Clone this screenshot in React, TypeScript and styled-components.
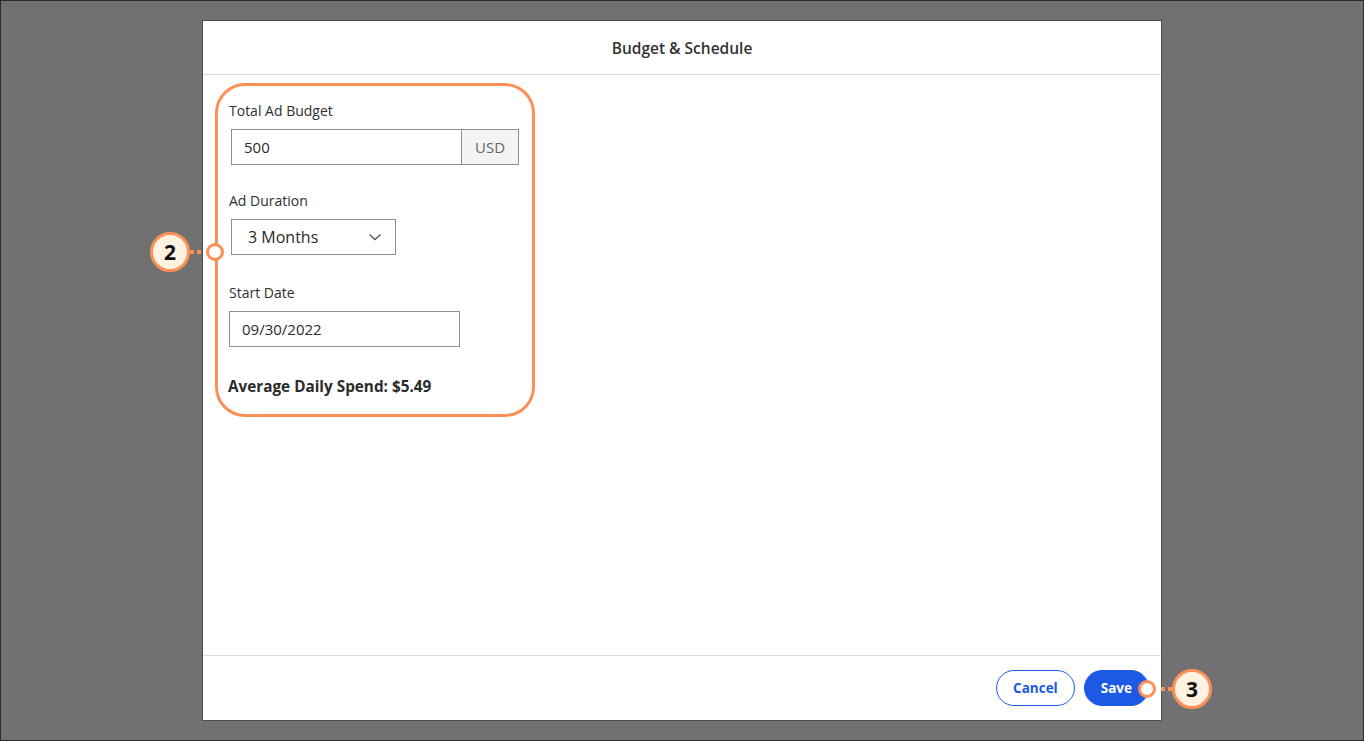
import React from "react";
import styled, { createGlobalStyle } from "styled-components";

const Global = createGlobalStyle`
  html, body { margin: 0; padding: 0; }
  body { font-family: "Open Sans", Lato, sans-serif; color: #2b2b2b; }
  * { box-sizing: border-box; }
`;

const Stage = styled.div`
  position: relative;
  width: 1364px;
  height: 741px;
  background: #717171;
  border: 1px solid #2a2a2a;
  display: flex;
  justify-content: center;
  padding-top: 19px;
`;

const Modal = styled.div`
  width: 960px;
  height: 701px;
  background: #fff;
  border: 1px solid #4e4e4e;
  display: flex;
  flex-direction: column;
`;

const Header = styled.div`
  height: 54px;
  flex: none;
  display: flex;
  align-items: center;
  justify-content: center;
  border-bottom: 1px solid #dcdcdc;
  font-size: 15.5px;
  font-weight: 600;
  color: #333;
`;

const Body = styled.div`
  flex: 1;
  padding: 8px 12px;
`;

const Panel = styled.div`
  position: relative;
  width: 320px;
  height: 334px;
  border: 3px solid #fb9158;
  border-radius: 30px;
  padding: 15px 12px 0 11px;
  display: flex;
  flex-direction: column;
  gap: 26px;
`;

const Field = styled.div<{ $top?: number }>`
  display: flex;
  flex-direction: column;
  gap: 8px;
  margin-top: ${(p) => p.$top ?? 0}px;
`;

const Label = styled.div`
  font-size: 14px;
  line-height: 20px;
  color: #2f2f2f;
`;

const InputGroup = styled.div<{ $width: number; $shift?: number }>`
  display: flex;
  width: ${(p) => p.$width}px;
  height: 36px;
  margin-left: ${(p) => p.$shift ?? 2}px;
  border: 1px solid #8f8f8f;
`;

const Value = styled.div<{ $pad?: number; $size?: number }>`
  flex: 1;
  display: flex;
  align-items: center;
  padding-left: ${(p) => p.$pad ?? 12}px;
  font-size: ${(p) => p.$size ?? 15}px;
  color: #2a2a2a;
`;

const Addon = styled.div`
  width: 57px;
  display: flex;
  align-items: center;
  justify-content: center;
  background: #f4f4f4;
  border-left: 1px solid #8f8f8f;
  font-size: 15px;
  color: #666;
`;

const Chevron = styled.div`
  width: 40px;
  display: flex;
  align-items: center;
  justify-content: center;
`;

const Summary = styled.div`
  font-size: 15.3px;
  font-weight: 700;
  line-height: 20px;
  margin-top: 3px;
  margin-left: -1px;
  color: #2b2b2b;
`;

const Footer = styled.div`
  height: 65px;
  flex: none;
  border-top: 1px solid #dcdcdc;
  display: flex;
  align-items: center;
  justify-content: flex-end;
  gap: 9px;
  padding-right: 12px;
`;

const Button = styled.button<{ $primary?: boolean }>`
  height: 36px;
  padding: 0 16px;
  border-radius: 18px;
  font-family: inherit;
  font-size: 13.5px;
  font-weight: 700;
  border: 1px solid #1c5ae6;
  background: ${(p) => (p.$primary ? "#1c5ae6" : "#fff")};
  color: ${(p) => (p.$primary ? "#fff" : "#1c5ae6")};
`;

const Bubble = styled.div<{ $x: number; $y: number }>`
  position: absolute;
  left: ${(p) => p.$x - 20}px;
  top: ${(p) => p.$y - 20}px;
  width: 40px;
  height: 40px;
  border-radius: 50%;
  border: 3px solid #fb9158;
  background: #fff2e1;
  display: flex;
  align-items: center;
  justify-content: center;
  font-family: "Open Sans", sans-serif;
  font-size: 21px;
  font-weight: 700;
  color: #111;
`;

const Knob = styled.div<{ $x: number; $y: number }>`
  position: absolute;
  left: ${(p) => p.$x - 9}px;
  top: ${(p) => p.$y - 9}px;
  width: 18px;
  height: 18px;
  border-radius: 50%;
  border: 3px solid #fb9158;
  background: #fff;
`;

const Dot = styled.div<{ $x: number; $y: number }>`
  position: absolute;
  left: ${(p) => p.$x - 2}px;
  top: ${(p) => p.$y - 2}px;
  width: 4px;
  height: 4px;
  background: #fb9158;
`;

const Callout: React.FC<{ n: string; bx: number; kx: number; y: number }> = ({ n, bx, kx, y }) => {
  const dir = bx > kx ? 1 : -1;
  return (
    <>
      <Dot $x={kx + dir * 16} $y={y} />
      <Dot $x={kx + dir * 23} $y={y} />
      <Knob $x={kx} $y={y} />
      <Bubble $x={bx} $y={y}>{n}</Bubble>
    </>
  );
};

export default function App() {
  return (
    <Stage>
      <Global />
      <Modal>
        <Header>Budget &amp; Schedule</Header>
        <Body>
          <Panel>
            <Field>
              <Label>Total Ad Budget</Label>
              <InputGroup $width={288}>
                <Value>500</Value>
                <Addon>USD</Addon>
              </InputGroup>
            </Field>
            <Field>
              <Label>Ad Duration</Label>
              <InputGroup $width={165}>
                <Value $pad={16} $size={16}>3 Months</Value>
                <Chevron>
                  <svg width="14" height="8" viewBox="0 0 14 8">
                    <path d="M1.5 1.5 L7 6.5 L12.5 1.5" fill="none" stroke="#555" strokeWidth="1.4" />
                  </svg>
                </Chevron>
              </InputGroup>
            </Field>
            <Field $top={2}>
              <Label>Start Date</Label>
              <InputGroup $width={231} $shift={0}>
                <Value>09/30/2022</Value>
              </InputGroup>
            </Field>
            <Summary>Average Daily Spend: $5.49</Summary>
          </Panel>
        </Body>
        <Footer>
          <Button>Cancel</Button>
          <Button $primary>Save</Button>
        </Footer>
      </Modal>
      <Callout n="2" bx={169} kx={214} y={251} />
      <Callout n="3" bx={1191} kx={1146} y={688} />
    </Stage>
  );
}
